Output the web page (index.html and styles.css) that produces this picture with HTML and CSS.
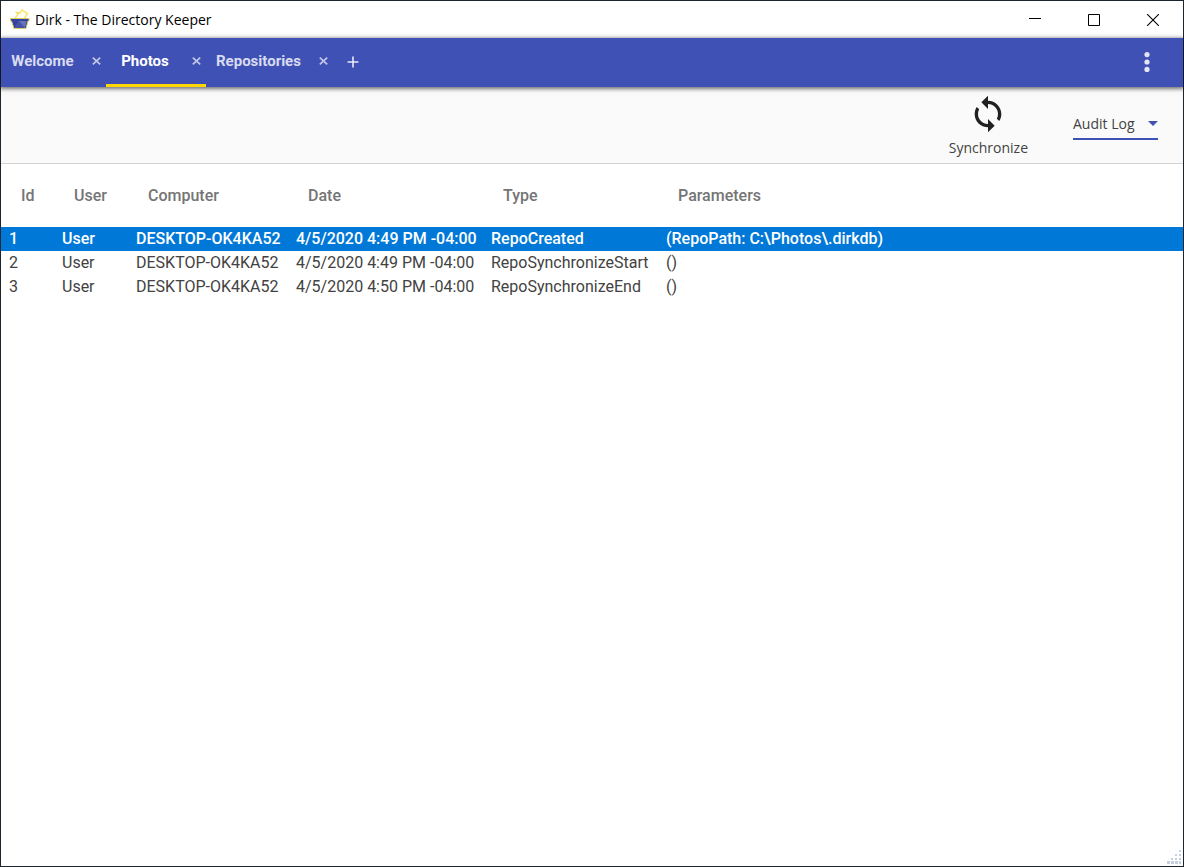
FILE: index.html
```html
<!DOCTYPE html>
<html lang="en">
<head>
<meta charset="utf-8">
<title>Dirk - The Directory Keeper</title>
<link rel="stylesheet" href="styles.css">
</head>
<body>
<div class="window">
  <header class="titlebar">
    <svg class="logo" width="22" height="22" viewBox="0 0 22 22" aria-hidden="true">
      <path d="M5 11 9 5 7.500 3.500 11 4l2-3 5.500 3.500L14.500 11z" fill="#fffef4" stroke="#f8e05a" stroke-width="1.3"/>
      <path d="M1.500 9.500h18.500v2.500h-1l-2 7.500H5L2.500 12h-1z" fill="#3443a0" stroke="#dccb62"/>
      <path d="m10 12 7.500 0-1.500 7H5.500z" fill="#6873b6"/>
      <path d="m10 12 6 7H5.500z" fill="#4552a6"/>
    </svg>
    <h1 class="title">Dirk - The Directory Keeper</h1>
    <div class="controls">
      <button class="control" type="button" aria-label="Minimize"><svg width="12" height="12" viewBox="0 0 12 12"><path d="M0 4.500h12" stroke="#000"/></svg></button>
      <button class="control" type="button" aria-label="Maximize"><svg width="12" height="12" viewBox="0 0 12 12"><path d="M.5.5h11v11H.5z" fill="none" stroke="#000"/></svg></button>
      <button class="control" type="button" aria-label="Close"><svg width="12" height="12" viewBox="0 0 12 12"><path d="m0 0 12 12M12 0 0 12" stroke="#000" stroke-width="1.1"/></svg></button>
    </div>
  </header>

  <nav class="tabs">
    <div class="tab">
      <button class="tab-label" type="button">Welcome</button>
      <button class="tab-close" type="button" aria-label="Close Welcome"><svg width="9" height="8" viewBox="0 0 9 8"><path d="m.8.7 7.400 6.600m0-6.600L.8 7.300"/></svg></button>
    </div>
    <div class="tab tab-active">
      <button class="tab-label" type="button">Photos</button>
      <button class="tab-close" type="button" aria-label="Close Photos"><svg width="9" height="8" viewBox="0 0 9 8"><path d="m.8.7 7.400 6.600m0-6.600L.8 7.300"/></svg></button>
    </div>
    <div class="tab">
      <button class="tab-label" type="button">Repositories</button>
      <button class="tab-close" type="button" aria-label="Close Repositories"><svg width="9" height="8" viewBox="0 0 9 8"><path d="m.8.7 7.400 6.600m0-6.600L.8 7.300"/></svg></button>
    </div>
    <button class="tab-add" type="button" aria-label="New tab"><svg width="12" height="12" viewBox="0 0 12 12"><path d="M6 .5v11M.5 6h11" stroke="#e8eaf8" stroke-width="1.600"/></svg></button>
    <button class="menu" type="button" aria-label="Menu"><svg width="6" height="20" viewBox="0 0 6 20" fill="#e3e5f5"><circle cx="3" cy="2.600" r="2.600"/><circle cx="3" cy="10" r="2.600"/><circle cx="3" cy="17.400" r="2.600"/></svg></button>
  </nav>

  <div class="toolbar">
    <button class="sync" type="button">
      <svg width="40" height="40" viewBox="0 0 24 24" aria-hidden="true"><path fill="#212121" d="M12 4V1L8 5l4 4V6c3.310 0 6 2.690 6 6 0 1.010-.25 1.970-.7 2.800l1.460 1.460C19.540 15.030 20 13.570 20 12c0-4.420-3.580-8-8-8zm0 14c-3.310 0-6-2.690-6-6 0-1.010.25-1.970.7-2.800L5.240 7.740C4.460 8.970 4 10.430 4 12c0 4.420 3.580 8 8 8v3l4-4-4-4v3z"/></svg>
      <span>Synchronize</span>
    </button>
    <div class="view">
      <select class="view-select" aria-label="View"><option>Audit Log</option></select>
      <svg class="view-arrow" width="10" height="5" viewBox="0 0 10 5" aria-hidden="true"><path d="M0 0h10L5 5z" fill="#3f51b5"/></svg>
    </div>
  </div>

  <main class="content">
    <table class="log">
      <colgroup><col class="col-id"><col class="col-user"><col class="col-computer"><col class="col-date"><col class="col-type"><col></colgroup>
      <thead>
        <tr><th>Id</th><th>User</th><th>Computer</th><th>Date</th><th>Type</th><th>Parameters</th></tr>
      </thead>
      <tbody>
        <tr class="selected"><td>1</td><td>User</td><td>DESKTOP-OK4KA52</td><td>4/5/2020 4:49 PM -04:00</td><td>RepoCreated</td><td>(RepoPath: C:\Photos\.dirkdb)</td></tr>
        <tr><td>2</td><td>User</td><td>DESKTOP-OK4KA52</td><td>4/5/2020 4:49 PM -04:00</td><td>RepoSynchronizeStart</td><td>()</td></tr>
        <tr><td>3</td><td>User</td><td>DESKTOP-OK4KA52</td><td>4/5/2020 4:50 PM -04:00</td><td>RepoSynchronizeEnd</td><td>()</td></tr>
      </tbody>
    </table>
  </main>
  <footer class="statusbar">
    <svg width="14" height="14" viewBox="0 0 14 14" fill="#c6cfdf" aria-hidden="true"><path d="M12 0h2v2h-2zM8 4h2v2H8zM12 4h2v2h-2zM4 8h2v2H4zM8 8h2v2H8zM12 8h2v2h-2zM0 11h3v3H0zM4 11h3v3H4zM8 11h3v3H8zM12 11h2v3h-2z"/></svg>
  </footer>
</div>
</body>
</html>
```
FILE: styles.css
```css
* {
  box-sizing: border-box;
}

body {
  margin: 0;
  font-family: Roboto, "Liberation Sans", sans-serif;
  color: #424242;
}

button {
  margin: 0;
  padding: 0;
  border: 0;
  background: none;
  font: inherit;
  color: inherit;
}

svg {
  display: block;
}

.window {
  display: flex;
  flex-direction: column;
  min-height: 100vh;
  border: 1px solid #1c262e;
  background: #fff;
}

.titlebar {
  display: flex;
  align-items: center;
  height: 37px;
  padding: 0 1px 0 8px;
}

.title {
  margin: 0 auto 0 4px;
  font-family: "Open Sans", "Noto Sans", sans-serif;
  font-size: 14px;
  font-weight: 400;
  color: #000;
}

.controls {
  display: flex;
  align-self: stretch;
}

.control {
  display: grid;
  place-items: center;
  width: 59px;
}

.tabs {
  position: relative;
  display: flex;
  height: 49px;
  background: #3f51b5;
  color: #d9dcf0;
  font-size: 15px;
  font-weight: 700;
  box-shadow: 0 1px 4px 1px rgba(0, 0, 0, 0.55);
}

.tab {
  display: flex;
  align-items: center;
  min-width: 100px;
  padding: 0 5px 0 10px;
  border-bottom: 3px solid transparent;
}

.tab-active {
  border-color: #ffd600;
  color: #fff;
}

.tab-label {
  flex: 1;
  padding-right: 18px;
  text-align: center;
}

.tab-close path {
  stroke: #c3c8e8;
  stroke-width: 1.7;
}

.tab:first-child {
  min-width: 105px;
}

.tab-add {
  display: grid;
  place-items: center;
  width: 40px;
  padding-bottom: 1px;
}

.menu {
  margin-left: auto;
  padding: 0 33px 1px;
}

.toolbar {
  display: flex;
  justify-content: flex-end;
  height: 77px;
  padding-right: 25px;
  gap: 45px;
  background: #fafafa;
  border-bottom: 1px solid #d3d3d3;
  font-family: "Open Sans", "Noto Sans", sans-serif;
  font-size: 14px;
}

.sync {
  display: flex;
  flex-direction: column;
  align-items: center;
  padding-top: 7px;
  line-height: 28px;
}

.view {
  position: relative;
  align-self: flex-start;
  margin-top: 22px;
}

.view-select {
  appearance: none;
  width: 85px;
  height: 31px;
  padding: 0;
  border: 0;
  border-bottom: 2px solid #3f51b5;
  border-radius: 0;
  background: none;
  font: inherit;
  color: inherit;
}

.view-arrow {
  position: absolute;
  top: 12px;
  right: 0;
  pointer-events: none;
}

.content {
  flex: 1;
}

.log {
  width: 100%;
  border-collapse: collapse;
  table-layout: fixed;
  font-size: 16px;
  line-height: 24px;
  white-space: nowrap;
}

.col-id { width: 53px; }
.col-user { width: 74px; }
.col-computer { width: 160px; }
.col-date { width: 195px; }
.col-type { width: 175px; }

.log th {
  height: 63px;
  padding: 0 0 0 20px;
  text-align: left;
  font-weight: 500;
  color: #757575;
}

.log td {
  padding: 0 0 0 8px;
}

.selected {
  background: #0078d7;
  color: #fff;
  font-weight: 500;
}

.statusbar {
  display: flex;
  justify-content: flex-end;
  padding: 0 2px 2px 0;
}
```
